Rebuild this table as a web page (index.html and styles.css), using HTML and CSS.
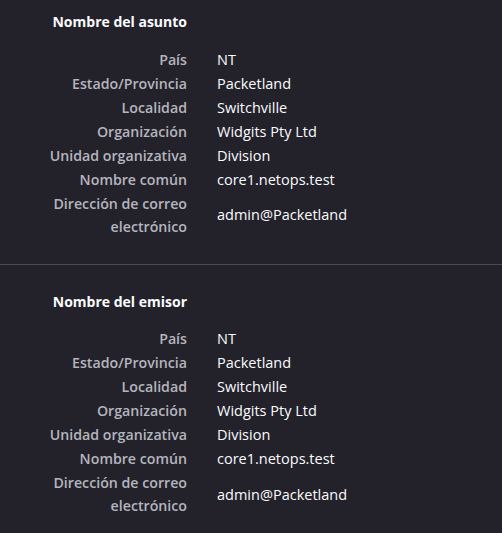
FILE: index.html
```html
<!DOCTYPE html>
<html lang="es">
<head>
<meta charset="utf-8">
<link rel="stylesheet" href="styles.css">
</head>
<body>
<section class="sec first">
  <div class="grid">
    <h2 class="title">Nombre del asunto</h2><div></div>
  </div>
  <div class="grid rows">
    <div class="label">País</div><div class="value">NT</div>
    <div class="label">Estado/Provincia</div><div class="value">Packetland</div>
    <div class="label">Localidad</div><div class="value">Switchville</div>
    <div class="label">Organización</div><div class="value">Widgits Pty Ltd</div>
    <div class="label">Unidad organizativa</div><div class="value">Division</div>
    <div class="label">Nombre común</div><div class="value">core1.netops.test</div>
    <div class="label">Dirección de correo electrónico</div><div class="value">admin@Packetland</div>
  </div>
</section>
<section class="sec">
  <div class="grid">
    <h2 class="title">Nombre del emisor</h2><div></div>
  </div>
  <div class="grid rows">
    <div class="label">País</div><div class="value">NT</div>
    <div class="label">Estado/Provincia</div><div class="value">Packetland</div>
    <div class="label">Localidad</div><div class="value">Switchville</div>
    <div class="label">Organización</div><div class="value">Widgits Pty Ltd</div>
    <div class="label">Unidad organizativa</div><div class="value">Division</div>
    <div class="label">Nombre común</div><div class="value">core1.netops.test</div>
    <div class="label">Dirección de correo electrónico</div><div class="value">admin@Packetland</div>
  </div>
</section>
</body>
</html>
```
FILE: styles.css
```css
html, body {
  margin: 0;
  padding: 0;
  background: #23222b;
  height: 100%;
}
body {
  font-family: "Open Sans", "Noto Sans", sans-serif;
  font-size: 14.5px;
  line-height: 23px;
  color: #fbfbfe;
  overflow: hidden;
}
.sec {
  padding: 24.5px 0 26.5px;
  border-bottom: 1px solid #4a4953;
}
.sec.first {
  padding-top: 10px;
}
.sec:last-child {
  border-bottom: none;
}
.grid {
  display: grid;
  grid-template-columns: 187px 1fr;
  column-gap: 30px;
}
.rows {
  margin-top: 14.5px;
  row-gap: 1px;
}
.title {
  margin: 0;
  font-size: 14px;
  font-weight: 700;
  line-height: 23px;
  text-align: right;
  color: #fbfbfe;
}
.label {
  text-align: right;
  color: #b5b5bd;
  font-size: 14.2px;
  font-weight: 600;
  padding-left: 36px;
}
.value {
  color: #fbfbfe;
  align-self: center;
}
```
